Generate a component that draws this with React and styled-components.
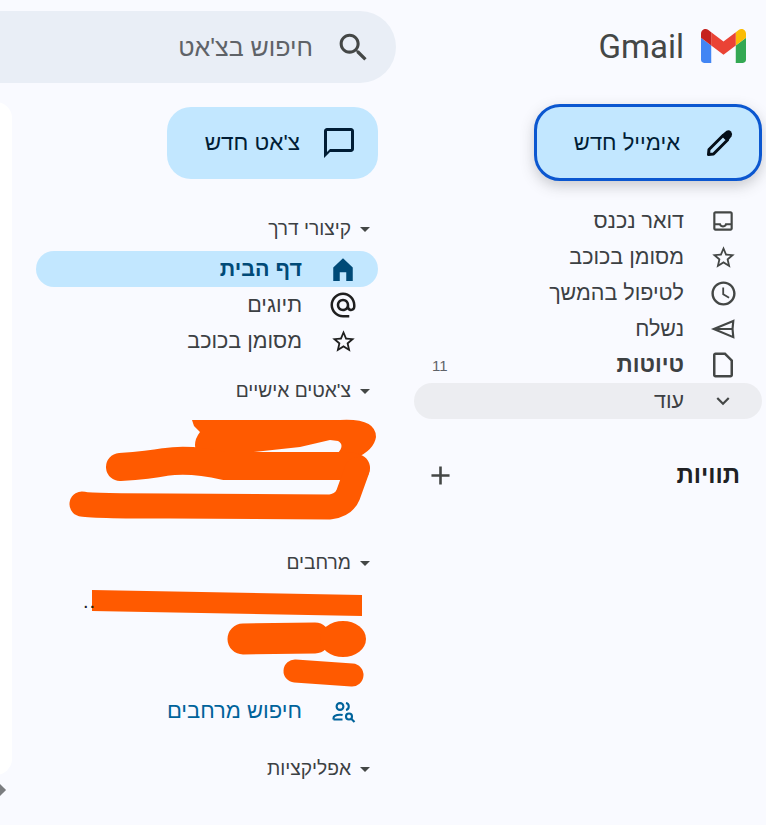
import React from 'react';
import styled, { createGlobalStyle } from 'styled-components';

const GlobalStyle = createGlobalStyle`
  html, body {
    margin: 0;
    padding: 0;
    background: #f9faff;
  }
  * {
    box-sizing: border-box;
  }
`;

const Page = styled.div`
  display: flex;
  width: 766px;
  height: 825px;
  overflow: hidden;
  background: #f9faff;
  font-family: "Liberation Sans", Arial, sans-serif;
  color: #202124;
`;

const Sidebar = styled.aside`
  flex: 0 0 352px;
  display: flex;
  flex-direction: column;
`;

const LogoBar = styled.div`
  display: flex;
  align-items: center;
  gap: 17px;
  height: 102px;
  padding: 0 20px 10px 0;
`;

const LogoText = styled.span`
  font-family: Roboto, sans-serif;
  font-size: 33px;
  color: #444746;
`;

const Compose = styled.button`
  display: flex;
  align-items: center;
  gap: 24px;
  width: 228px;
  height: 77px;
  margin: 2px 4px 22px 0;
  padding: 0 23px;
  border: 3px solid #0b57d0;
  border-radius: 26px;
  background: #c2e7ff;
  box-shadow: 0 5px 14px rgba(60, 64, 67, 0.26);
  color: #001d35;
  font: inherit;
  font-size: 22px;
`;

const MainColumn = styled.div`
  flex: 0 0 414px;
  display: flex;
  flex-direction: column;
`;

const SearchBar = styled.div`
  display: flex;
  flex: 0 0 72px;
  align-items: center;
  gap: 24px;
  width: 436px;
  height: 72px;
  margin: 11px 18px 19px 0;
  padding: 0 27px;
  border-radius: 36px;
  background: #e9eef6;
  color: #5f6368;
  font-size: 25px;
`;

const Body = styled.div`
  display: flex;
  flex: 1;
`;

const ChatNav = styled.nav`
  flex: 0 0 402px;
  padding: 5px 36px 0 24px;
`;

const NewChat = styled.button`
  display: flex;
  align-items: center;
  gap: 23px;
  width: 211px;
  height: 72px;
  margin: 0 0 38px;
  padding: 0 23px;
  border: 0;
  border-radius: 24px;
  background: #c2e7ff;
  color: #001d35;
  font: inherit;
  font-size: 22.5px;
`;

const SectionTitle = styled.h3`
  display: flex;
  align-items: center;
  gap: 9px;
  height: 24px;
  margin: ${(p) => p.$top || 0}px 0 ${(p) => p.$after || 8}px;
  padding-right: 8px;
  font-size: 19.2px;
  font-weight: 400;
  color: #3c4043;

  &::before {
    content: '';
    width: 0;
    height: 0;
    border-left: 5px solid transparent;
    border-right: 5px solid transparent;
    border-top: 5px solid #444746;
  }
`;

const Row = styled.div`
  display: flex;
  align-items: center;
  gap: ${(p) => p.$gap || 26}px;
  height: 36px;
  padding: 0 ${(p) => p.$inset || 26}px 0 18px;
  border-radius: 18px;
  background: ${(p) => p.$bg || 'transparent'};
  color: ${(p) => p.$color || '#3c4043'};
  font-size: ${(p) => p.$size || 21.5}px;
  font-weight: ${(p) => (p.$bold ? 700 : 400)};
`;

const MailRows = styled.div`
  margin-right: 4px;
`;

const Count = styled.span`
  margin-right: auto;
  color: #5f6368;
  font-size: 15px;
  font-weight: 400;
`;

const LabelsBar = styled.div`
  display: flex;
  align-items: center;
  justify-content: space-between;
  height: 36px;
  margin: 38px 26px 0 0;
  padding-left: 12px;
  font-size: 24px;
  font-weight: 700;
  color: #202124;
`;

const Redacted = styled.div`
  position: relative;
  height: ${(p) => p.$height}px;
`;

const Scribble = styled.svg`
  display: block;
  width: 342px;
  height: 100%;
`;

const Leftover = styled.span`
  position: absolute;
  left: 47px;
  top: 8px;
  font-size: 20px;
  letter-spacing: 1px;
  line-height: 20px;
`;

const SidePanel = styled.div`
  display: flex;
  flex-direction: column;
  flex: 0 0 12px;
`;

const WhiteCard = styled.div`
  height: 673px;
  background: #fff;
  border-radius: 0 16px 16px 0;
`;

const Diamond = styled.div`
  width: 10px;
  height: 10px;
  margin: 10px 8px 0 0;
  background: #7b7d80;
  transform: rotate(45deg);
`;

const IconSlot = styled.span`
  display: flex;
  flex: none;
  align-items: center;
  justify-content: center;
  width: ${(p) => p.$width}px;
  height: ${(p) => p.$width}px;
`;

const Icon = ({ d, slot = 26, size = 26, color = '#444746' }) => (
  <IconSlot $width={slot}>
    <svg width={size} height={size} viewBox="0 0 24 24" fill={color} style={{ flex: 'none' }}>
      <path d={d} />
    </svg>
  </IconSlot>
);

const paths = {
  inbox:
    'M19 3H5c-1.1 0-2 .9-2 2v14c0 1.1.9 2 2 2h14c1.1 0 2-.9 2-2V5c0-1.1-.9-2-2-2zm0 16H5v-3h3.56c.69 1.19 1.97 2 3.45 2s2.75-.81 3.45-2H19v3zm0-5h-4.99c0 1.1-.9 2-2 2s-2-.9-2-2H5V5h14v9z',
  star:
    'M22 9.24l-7.19-.62L12 2 9.19 8.63 2 9.24l5.46 4.73L5.82 21 12 17.27 18.18 21l-1.63-7.03L22 9.24zM12 15.4l-3.76 2.27 1-4.28-3.32-2.88 4.38-.38L12 6.1l1.71 4.04 4.38.38-3.32 2.88 1 4.28L12 15.4z',
  clock:
    'M11.99 2C6.47 2 2 6.48 2 12s4.47 10 9.99 10C17.52 22 22 17.52 22 12S17.52 2 11.99 2zM12 20c-4.42 0-8-3.58-8-8s3.58-8 8-8 8 3.58 8 8-3.58 8-8 8zm.5-13H11v6l5.25 3.15.75-1.23-4.5-2.67z',
  draft:
    'M14 2H6c-1.1 0-1.99.9-1.99 2L4 20c0 1.1.89 2 1.99 2H18c1.1 0 2-.9 2-2V8l-6-6zM6 20V4h7.17L18 8.83V20H6z',
  more: 'M16.59 8.59L12 13.17 7.41 8.59 6 10l6 6 6-6z',
  plus: 'M19 13h-6v6h-2v-6H5v-2h6V5h2v6h6v2z',
  chat:
    'M20 2H4c-1.1 0-2 .9-2 2v18l4-4h14c1.1 0 2-.9 2-2V4c0-1.1-.9-2-2-2zm0 14H6l-2 2V4h16v12z',
  home: 'M3 23V10.5L12 2l9 8.5V23h-6v-8H9v8z',
  at:
    'M12 2C6.48 2 2 6.48 2 12s4.48 10 10 10h5v-2h-5c-4.34 0-8-3.66-8-8s3.66-8 8-8 8 3.66 8 8v1.43c0 .79-.71 1.57-1.5 1.57s-1.5-.78-1.5-1.57V12c0-2.76-2.24-5-5-5s-5 2.24-5 5 2.24 5 5 5c1.38 0 2.64-.56 3.54-1.47.65.89 1.77 1.47 2.96 1.47 1.97 0 3.5-1.6 3.5-3.57V12c0-5.52-4.48-10-10-10zm0 13c-1.66 0-3-1.34-3-3s1.34-3 3-3 3 1.34 3 3-1.34 3-3 3z',
  search:
    'M15.5 14h-.79l-.28-.27C15.41 12.59 16 11.11 16 9.5 16 5.91 13.09 3 9.5 3S3 5.91 3 9.5 5.91 16 9.5 16c1.61 0 3.09-.59 4.23-1.57l.27.28v.79l5 4.99L20.49 19l-4.99-5zm-6 0C7.01 14 5 11.99 5 9.5S7.01 5 9.5 5 14 7.01 14 9.5 11.99 14 9.5 14z',
};

const GmailLogo = () => (
  <svg width="45" height="34" viewBox="52 42 88 66">
    <path fill="#4285f4" d="M58 108h14V74L52 59v43c0 3.32 2.69 6 6 6" />
    <path fill="#34a853" d="M120 108h14c3.32 0 6-2.69 6-6V59l-20 15" />
    <path fill="#fbbc04" d="M120 48v26l20-15v-8c0-7.42-8.47-11.65-14.4-7.2" />
    <path fill="#ea4335" d="M72 74V48l24 18 24-18v26L96 92" />
    <path fill="#c5221f" d="M52 51v8l20 15V48l-5.6-4.2c-5.94-4.45-14.4-.22-14.4 7.2" />
  </svg>
);

const PencilIcon = () => (
  <IconSlot $width={32}>
    <svg width="32" height="32" viewBox="0 0 32 32" fill="none" stroke="#060f18" strokeWidth="3" strokeLinejoin="round">
      <path d="M4.5 27.5l.5-5L19 8.5l4.5 4.5-14 14z" />
      <path fill="#060f18" stroke="none" d="M18 7.5L22.5 3.8Q25 2.5 27 4.5Q29 7 27.5 9.5L24 14z" />
    </svg>
  </IconSlot>
);

const SendIcon = () => (
  <IconSlot $width={26}>
    <svg width="26" height="26" viewBox="0 0 24 24" fill="none" stroke="#444746" strokeWidth="2" strokeLinejoin="miter">
      <path d="M21.5 4.5L3.5 12l18 7.5L20.8 12zM3.5 12H20.8" />
    </svg>
  </IconSlot>
);

const FindSpacesIcon = () => (
  <IconSlot $width={26}>
    <svg width="26" height="26" viewBox="0 0 26 26" fill="none" stroke="#00639b" strokeWidth="2.1">
      <circle cx="10" cy="8.5" r="3.4" />
      <path d="M16 5a3.6 3.6 0 0 1 0 7" />
      <path d="M3.5 21.5v-1.2c0-2.4 2.8-3.6 6.5-3.6 1 0 1.8.1 2.6.3M3.5 21.5h9" />
      <circle cx="19" cy="18.5" r="3" />
      <path d="M21.2 20.8l3.3 3.2" />
    </svg>
  </IconSlot>
);

const mailRows = [
  { icon: 'inbox', label: 'דואר נכנס' },
  { icon: 'star', label: 'מסומן בכוכב', size: 27 },
  { icon: 'clock', label: 'לטיפול בהמשך', size: 29 },
  { icon: 'send', label: 'נשלח' },
  { icon: 'draft', label: 'טיוטות', bold: true, count: 11, size: 30 },
];

function App() {
  return (
    <Page dir="rtl">
      <GlobalStyle />
      <Sidebar>
        <LogoBar>
          <GmailLogo />
          <LogoText dir="ltr">Gmail</LogoText>
        </LogoBar>
        <Compose>
          <PencilIcon />
          אימייל חדש
        </Compose>
        <MailRows>
          {mailRows.map((row) => (
            <Row key={row.label} $bold={row.bold} $size={row.bold ? 22.5 : undefined}>
              {row.icon === 'send' ? <SendIcon /> : <Icon d={paths[row.icon]} size={row.size} />}
              {row.label}
              {row.count && <Count>{row.count}</Count>}
            </Row>
          ))}
          <Row $bg="#ecedf1">
            <Icon d={paths.more} />
            עוד
          </Row>
        </MailRows>
        <LabelsBar>
          תוויות
          <Icon d={paths.plus} slot={28} size={31} />
        </LabelsBar>
      </Sidebar>

      <MainColumn>
        <SearchBar>
          <Icon d={paths.search} slot={32} size={37} />
          חיפוש בצ'אט
        </SearchBar>
        <Body>
          <ChatNav>
            <NewChat>
              <Icon d={paths.chat} slot={32} size={36} color="#001d35" />
              צ'אט חדש
            </NewChat>

            <SectionTitle $after={10}>קיצורי דרך</SectionTitle>
            <Row $inset={22} $gap={28} $bg="#c2e7ff" $color="#004a77" $bold>
              <Icon d={paths.home} color="#004a77" />
              דף הבית
            </Row>
            <Row $inset={22} $gap={28}>
              <Icon d={paths.at} size={30} color="#1f1f1f" />
              תיוגים
            </Row>
            <Row $inset={22} $gap={28}>
              <Icon d={paths.star} size={27} color="#1f1f1f" />
              מסומן בכוכב
            </Row>

            <SectionTitle $top={20}>צ'אטים אישיים</SectionTitle>
            <Redacted $height={140}>
              <Scribble viewBox="36 411 342 140" fill="none" stroke="#ff5a00" strokeLinecap="round" strokeLinejoin="round">
                <path
                  fill="#ff5a00"
                  stroke="none"
                  d="M192 420L340 420Q376 418 376 437Q374 450 356 458L338 453Q345 445 338 441L330 440L300 447L200 458Q190 445 200 432L194 426Z"
                />
                <path strokeWidth="28" d="M120 467Q150 465 165 462Q190 458 225 466L345 466Q352 466 356 468" />
                <path strokeWidth="25" d="M82 504Q90 506 170 506L330 507Q344 505 348 495L357 470" />
              </Scribble>
            </Redacted>

            <SectionTitle>מרחבים</SectionTitle>
            <Redacted $height={110}>
              <Leftover>..</Leftover>
              <Scribble viewBox="36 583 342 110" fill="none" stroke="#ff5a00" strokeLinecap="round">
                <path fill="#ff5a00" stroke="none" d="M92 590L362 595L362 616L92 611Z" />
                <path strokeWidth="31" d="M243 639L315 638" />
                <ellipse fill="#ff5a00" stroke="none" cx="343" cy="639" rx="23" ry="18" />
                <path strokeWidth="23" d="M295 671L352 675" />
              </Scribble>
            </Redacted>
            <Row $inset={22} $gap={28} $size={22} $color="#00639b">
              <FindSpacesIcon />
              חיפוש מרחבים
            </Row>

            <SectionTitle $top={28}>אפליקציות</SectionTitle>
          </ChatNav>
          <SidePanel>
            <WhiteCard />
            <Diamond />
          </SidePanel>
        </Body>
      </MainColumn>
    </Page>
  );
}

export default App;
